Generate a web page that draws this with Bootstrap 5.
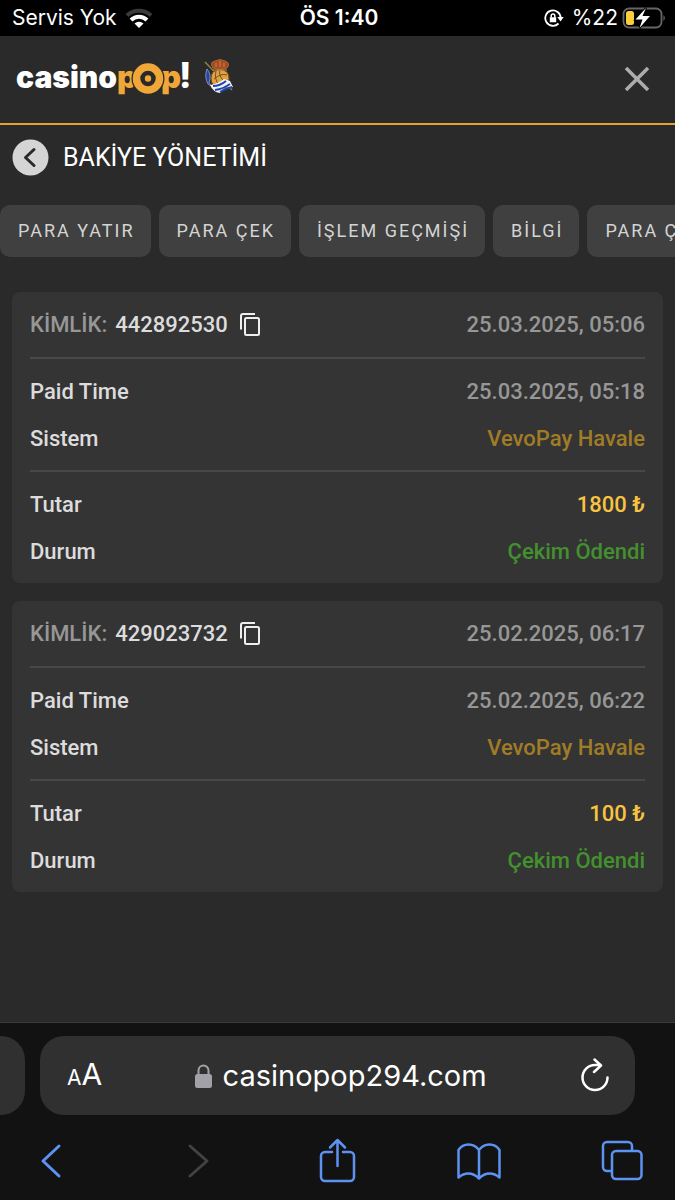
<!DOCTYPE html>
<html lang="tr">
<head>
<meta charset="utf-8">
<meta name="viewport" content="width=device-width, initial-scale=1">
<title>Bakiye Yönetimi</title>
<link href="https://cdn.jsdelivr.net/npm/bootstrap@5.3.0/dist/css/bootstrap.min.css" rel="stylesheet">
<style>
  body { background: #2a2a2a; color: #dcdcdc; font-family: Roboto, sans-serif; overflow-x: hidden; }
  svg { display: block; flex: none; }
  button.plain { background: none; border: 0; padding: 0; color: inherit; }
  .status-strip { background: #000; color: #fff; height: 36px; padding: 0 9px 0 12px; font: 21px/36px Inter, sans-serif; }
  .status-strip > * { flex: 1 1 0; }
  .status-clock { font-weight: 600; }
  .site-head { height: 89px; padding: 0 24px 2px 16px; border-bottom: 2px solid #e5a032; }
  .page-head { padding: 14px 12px 0; gap: 14px; height: 80px; }
  .page-head h1 { font-size: 25px; line-height: 38px; color: #fff; font-weight: 400; margin: 0; }
  .tab-strip { gap: 8px; overflow: hidden; }
  .tab-strip .tab-btn { flex: none; height: 52px; padding: 0 16px 2px 18px; border: 0; border-radius: 10px; background: #404040; color: #d4d4d4; font-size: 18px; letter-spacing: 2px; }
  .pay-list { padding: 35px 12px; gap: 18px; }
  .pay-card { background: #343434; border-radius: 8px; padding: 0 18px; font-size: 22px; line-height: 47px; font-weight: 500; }
  .pay-card dl { margin: 0; padding: 9px 0 8px; }
  .pay-card dl + dl { border-top: 2px solid #484848; }
  .pay-card dt, .pay-card dd { font-weight: inherit; margin: 0; }
  .pay-id { border-bottom: 2px solid #484848; height: 67px; }
  .dim { color: #979797; }
  .brown { color: #a07c27; }
  .gold { color: #f8c340; }
  .green { color: #43902f; }
  .browser-bar { background: #121212; border-top: 1px solid #3a3a3c; padding-top: 13px; font-family: Inter, sans-serif; color: #fff; }
  .url-row { gap: 15px; padding-right: 40px; }
  .url-stub { width: 25px; height: 79px; background: #303030; border-radius: 0 24px 24px 0; }
  .url-box { height: 79px; background: #303030; border-radius: 24px; padding: 0 22px 0 27px; }
  .url-box a { color: #fff; font-size: 29px; text-decoration: none; }
  .aa { font-size: 30px; line-height: 40px; }
  .aa small { font-size: 21px; }
  .tool-row { height: 85px; padding: 6px 31px 0 29px; color: #5e92f2; }
</style>
</head>
<body>
<div class="d-flex flex-column min-vh-100">
  <div class="status-strip d-flex align-items-center">
    <div class="d-flex align-items-center gap-2">Servis Yok
      <svg width="28" height="20" viewBox="0 0 28 20"><g fill="none" stroke-width="4"><path stroke="#3b3b3b" d="M2 7.500a17.500 17.500 0 0 1 24 0"/><path stroke="#fff" d="M6 12a11.500 11.500 0 0 1 16 0"/></g><path fill="#fff" d="M9.500 15.500a6.500 6.500 0 0 1 9 0L14 20z"/></svg>
    </div>
    <div class="status-clock text-center">ÖS 1:40</div>
    <div class="d-flex align-items-center justify-content-end">
      <svg class="me-2" width="20" height="18" viewBox="0 0 20 18"><path fill="none" stroke="#fff" stroke-width="1.800" d="M14.500 14.500A7.700 7.700 0 1 1 16.700 9"/><path fill="#fff" d="M13.300 8h6.400l-3.200 4.500zM5.800 8.300h6.400v5H5.800z"/><path fill="none" stroke="#fff" stroke-width="1.500" d="M7.200 8.500V6.700a1.800 1.800 0 0 1 3.600 0v1.800"/></svg>
      %22
      <svg class="ms-1" width="44" height="22" viewBox="0 0 44 22"><rect x="1.500" y="1.500" width="38" height="19" rx="5.500" fill="none" stroke="#66666a" stroke-width="1.800"/><path d="M41.500 8v6q2.500-3 0-6" fill="#77777a"/><rect x="4" y="4" width="8" height="14" rx="2.500" fill="#fbce3d"/><path d="M24 1 13.500 12.500h7L17.500 21 28 9h-7.500z" fill="#fff" stroke="#000" stroke-width="2" paint-order="stroke"/></svg>
    </div>
  </div>

  <header class="site-head d-flex align-items-center justify-content-between">
    <a href="#" class="d-flex align-items-center text-decoration-none" aria-label="casinopop!">
      <svg width="224" height="50" viewBox="0 0 224 50" font-family="Inter, sans-serif" font-weight="900">
        <text x="0" y="34" font-size="30" fill="#fff">casino</text>
        <g fill="#efa738">
          <text x="101" y="34" font-size="31">p</text>
          <text x="145" y="34" font-size="31">p</text>
        </g>
        <circle cx="132" cy="24.500" r="11" fill="#2a2a2a" stroke="#2a2a2a" stroke-width="11"/>
        <circle cx="132" cy="24.500" r="11.500" fill="none" stroke="#efa738" stroke-width="7.500"/>
        <circle cx="132" cy="24.500" r="3.200" fill="#efa738"/>
        <text x="163" y="34" font-size="35" font-weight="800" fill="#fff">!</text>
        <g transform="translate(188 5)">
          <path d="m1 3 27 28" stroke="#8b8348" stroke-width="1.500"/>
          <path fill="#e0a142" stroke="#754b16" d="M9 13q7-5 14 0 4 6 0 13-7 4-14 0-4-7 0-13z"/>
          <path fill="none" stroke="#75501f" d="M12 12q-2 8 3 14M16 11q-2 6 5 12M10 20q7-6 13-4"/>
          <path fill="#a94a24" stroke="#a5662f" d="M9 9Q5 3 11 2q5-3 10 0 6 2 2 7-7 3-14 0z"/>
          <path fill="none" stroke="#c58a45" d="M12 8V4m4 4V2m4 6V4M9 11h14"/>
          <path fill="#2545a0" stroke="#b9c6ee" stroke-width=".6" d="M3 10q5 5 2 14l4 4-5-3q-4-7-1-15z"/>
          <path fill="#f1f4ff" d="M6 26q8-1 14-6l6 2 3 6q-8 1-13 6-7-1-10-8z"/>
          <path fill="none" stroke="#2346a6" stroke-width="2" d="M9 27q7 0 13-5M11 31q8-1 15-6M16 33q6-4 12-5"/>
        </g>
      </svg>
    </a>
    <button type="button" class="plain" aria-label="Kapat"><svg width="28" height="28" viewBox="0 0 28 28"><path d="m3 3 22 22M25 3 3 25" stroke="#acacac" stroke-width="3.500"/></svg></button>
  </header>

  <main class="flex-grow-1">
    <div class="page-head d-flex align-items-start">
      <button type="button" class="plain" aria-label="Geri"><svg width="37" height="37" viewBox="0 0 37 37"><circle cx="18.500" cy="18.500" r="18" fill="#d5d5d5"/><path d="m22 10.500-8.500 8 8.500 8" fill="none" stroke="#2a2a2a" stroke-width="3" stroke-linecap="round" stroke-linejoin="round"/></svg></button>
      <h1>BAKİYE YÖNETİMİ</h1>
    </div>
    <nav class="tab-strip d-flex">
      <button type="button" class="tab-btn">PARA YATIR</button>
      <button type="button" class="tab-btn">PARA ÇEK</button>
      <button type="button" class="tab-btn">İŞLEM GEÇMİŞİ</button>
      <button type="button" class="tab-btn">BİLGİ</button>
      <button type="button" class="tab-btn">PARA ÇEK</button>
    </nav>
    <div class="pay-list d-flex flex-column">
      <section class="pay-card">
        <div class="pay-id d-flex align-items-center">
          <span class="dim me-2">KİMLİK:</span><span>442892530</span>
          <button type="button" class="plain ms-2" aria-label="Kopyala"><svg width="28" height="26" viewBox="0 0 28 26"><path d="M5 17.500V4a2 2 0 0 1 2-2h12" fill="none" stroke="#eee" stroke-width="2"/><rect x="9" y="6" width="14" height="17" rx="1.500" fill="none" stroke="#eee" stroke-width="2"/></svg></button>
          <time class="dim ms-auto">25.03.2025, 05:06</time>
        </div>
        <dl>
          <div class="d-flex justify-content-between"><dt>Paid Time</dt><dd class="dim">25.03.2025, 05:18</dd></div>
          <div class="d-flex justify-content-between"><dt>Sistem</dt><dd class="brown">VevoPay Havale</dd></div>
        </dl>
        <dl>
          <div class="d-flex justify-content-between"><dt>Tutar</dt><dd class="gold">1800 ₺</dd></div>
          <div class="d-flex justify-content-between"><dt>Durum</dt><dd class="green">Çekim Ödendi</dd></div>
        </dl>
      </section>
      <section class="pay-card">
        <div class="pay-id d-flex align-items-center">
          <span class="dim me-2">KİMLİK:</span><span>429023732</span>
          <button type="button" class="plain ms-2" aria-label="Kopyala"><svg width="28" height="26" viewBox="0 0 28 26"><path d="M5 17.500V4a2 2 0 0 1 2-2h12" fill="none" stroke="#eee" stroke-width="2"/><rect x="9" y="6" width="14" height="17" rx="1.500" fill="none" stroke="#eee" stroke-width="2"/></svg></button>
          <time class="dim ms-auto">25.02.2025, 06:17</time>
        </div>
        <dl>
          <div class="d-flex justify-content-between"><dt>Paid Time</dt><dd class="dim">25.02.2025, 06:22</dd></div>
          <div class="d-flex justify-content-between"><dt>Sistem</dt><dd class="brown">VevoPay Havale</dd></div>
        </dl>
        <dl>
          <div class="d-flex justify-content-between"><dt>Tutar</dt><dd class="gold">100 ₺</dd></div>
          <div class="d-flex justify-content-between"><dt>Durum</dt><dd class="green">Çekim Ödendi</dd></div>
        </dl>
      </section>
    </div>
  </main>

  <footer class="browser-bar">
    <div class="url-row d-flex">
      <div class="url-stub"></div>
      <div class="url-box flex-grow-1 d-flex align-items-center justify-content-between">
        <button type="button" class="plain aa" aria-label="Metin boyutu"><small>A</small>A</button>
        <a href="#" class="d-flex align-items-center gap-2"><svg width="22" height="26" viewBox="0 0 22 26"><rect x="2" y="11" width="17" height="14" rx="2.500" fill="#a2a1a8"/><path d="M5.500 12V7.500a5 5 0 0 1 10 0V12" fill="none" stroke="#a2a1a8" stroke-width="2"/></svg>casinopop294.com</a>
        <button type="button" class="plain" aria-label="Yenile"><svg width="36" height="36" viewBox="0 0 36 36" fill="none" stroke="#fff" stroke-width="2.500" stroke-linecap="round" stroke-linejoin="round"><path d="M30.500 19.500A12.500 12.500 0 1 1 18 7h5"/><path d="m17.500 1.500 6.500 6-7 6.500"/></svg></button>
      </div>
    </div>
    <div class="tool-row d-flex align-items-center justify-content-between">
      <button type="button" class="plain" aria-label="Önceki sayfa"><svg width="44" height="46" viewBox="0 0 44 46"><path d="M30 8 14 23l16 15" fill="none" stroke="currentColor" stroke-width="3" stroke-linecap="round" stroke-linejoin="round"/></svg></button>
      <button type="button" class="plain" aria-label="Sonraki sayfa"><svg width="44" height="46" viewBox="0 0 44 46"><path d="m18 8 17 15-17 15" fill="none" stroke="#424242" stroke-width="3" stroke-linecap="round" stroke-linejoin="round"/></svg></button>
      <button type="button" class="plain" aria-label="Paylaş"><svg width="44" height="46" viewBox="0 0 44 46" fill="none" stroke="currentColor" stroke-width="2.500" stroke-linecap="round" stroke-linejoin="round"><path d="M17 14h-7a4 4 0 0 0-4 4v21a4 4 0 0 0 4 4h25a4 4 0 0 0 4-4V18a4 4 0 0 0-4-4h-7M22.500 28V2M15 9.500 22.500 2 30 9.500"/></svg></button>
      <button type="button" class="plain" aria-label="Yer imleri"><svg width="44" height="46" viewBox="0 0 44 46" fill="none" stroke="currentColor" stroke-width="2.500" stroke-linejoin="round"><path d="M22 12Q18 6.500 11.500 6.500T1.500 12v27.500q4.500-4 10-4t10.500 5q5-5 10.500-5t10 4V12q-3.500-5.500-10-5.500T22 12zM22 12v28"/></svg></button>
      <button type="button" class="plain" aria-label="Sekmeler"><svg width="44" height="46" viewBox="0 0 44 46" fill="none" stroke="currentColor" stroke-width="2.500"><path d="M11.500 33H7a4 4 0 0 1-4-4V8a4 4 0 0 1 4-4h21a4 4 0 0 1 4 4v4.500"/><rect x="12" y="13" width="29.500" height="28" rx="4"/></svg></button>
    </div>
  </footer>
</div>
<script src="https://cdn.jsdelivr.net/npm/bootstrap@5.3.0/dist/js/bootstrap.bundle.min.js"></script>
</body>
</html>
